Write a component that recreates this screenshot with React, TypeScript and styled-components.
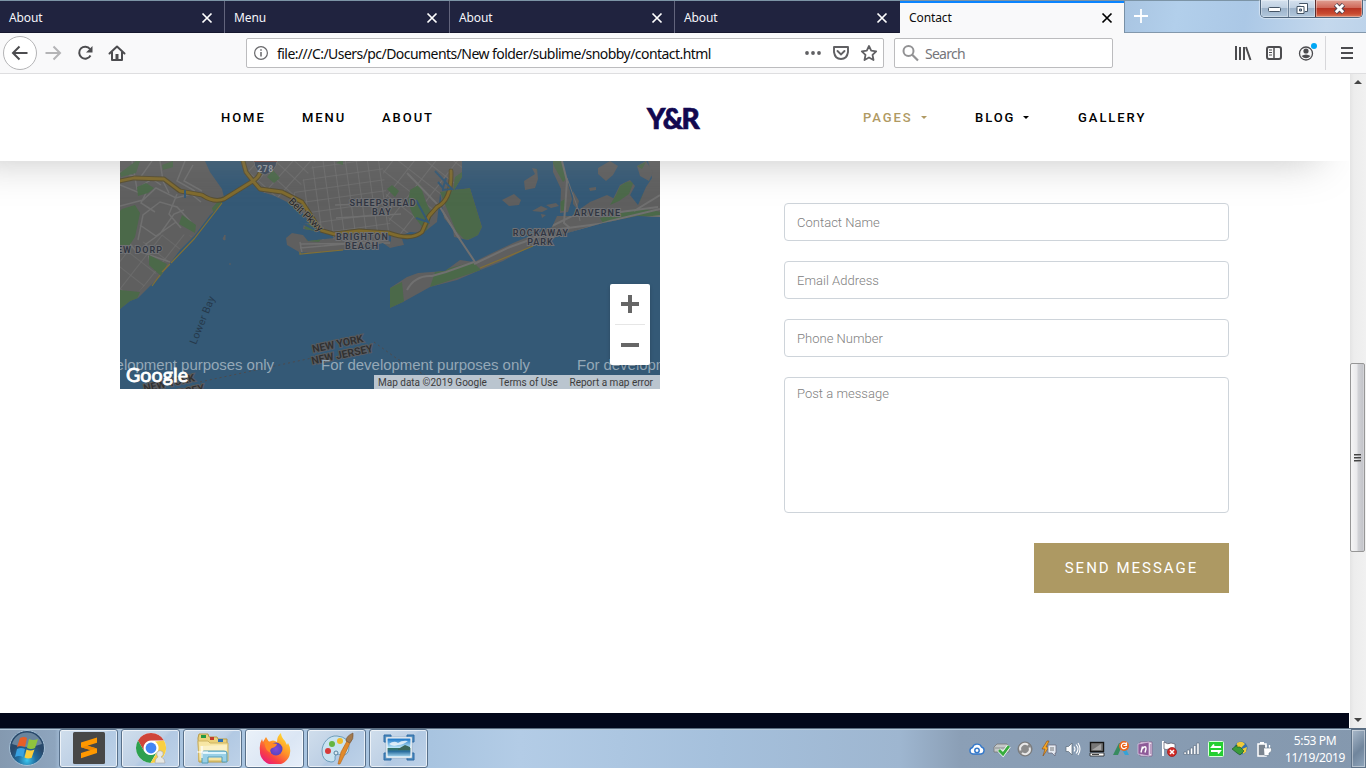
import React from "react";
import styled, { createGlobalStyle } from "styled-components";

const uiFont = '"Noto Sans", "Open Sans", sans-serif';

const GlobalStyle = createGlobalStyle`
  * { box-sizing: border-box; }
  body { margin: 0; overflow: hidden; background: #fff; font-family: Roboto, sans-serif; }
`;

const Screen = styled.div`
  width: 1366px;
  height: 768px;
  display: flex;
  flex-direction: column;
  overflow: hidden;
`;

/* ---------- browser chrome ---------- */
const TabStrip = styled.div`
  height: 33px;
  flex: none;
  display: flex;
  border-top: 1px solid #7c94a6;
  background: linear-gradient(100deg, #a9c5e2 82%, #b2cfeb 86%, #abc8e6 91%, #c4d8ed 97%, #bdd3ea);
`;

const Tab = styled.div<{ $active?: boolean; $last?: boolean }>`
  width: 225px;
  height: 32px;
  display: flex;
  align-items: center;
  justify-content: space-between;
  padding: 2px 11px 0 9px;
  font: 12px/16px ${uiFont};
  letter-spacing: -0.1px;
  color: ${(p) => (p.$active ? "#0c0c0d" : "#f5f5fa")};
  background: ${(p) => (p.$active ? "#f9f9fa" : "#20233f")};
  box-shadow: ${(p) => (p.$active ? "inset 0 2px #0a84ff" : "inset 0 -1px #15172e")};
  border-right: 1px solid ${(p) => (p.$active ? "#7890a6" : p.$last ? "#20233f" : "#62647c")};
`;

const TabTail = styled.div`
  flex: 1;
  display: flex;
  justify-content: space-between;
  align-items: flex-start;
  padding: 7px 3px 0 8px;
  border-bottom: 1px solid #8398ac;
`;

const WindowButtons = styled.div`
  display: flex;
  height: 18px;
  margin-top: -8px;
  border: 1px solid #50667d;
  border-top: 0;
  border-radius: 0 0 5px 5px;
  overflow: hidden;
  box-shadow: 0 0 1px 1px rgba(255, 255, 255, 0.45);
`;

const WindowButton = styled.div<{ $close?: boolean }>`
  width: ${(p) => (p.$close ? 47 : 27)}px;
  display: flex;
  align-items: center;
  justify-content: center;
  box-shadow: inset 0 0 0 1px rgba(255, 255, 255, 0.35);
  border-left: ${(p) => (p.$close ? "1px solid #5b2d2d" : "1px solid #6b8097")};
  &:first-child { border-left: 0; padding-top: 3px; }
  background: ${(p) =>
    p.$close
      ? "linear-gradient(#e0a093, #d0695a 45%, #b83423 50%, #c94a30 80%, #d97b5c)"
      : "linear-gradient(#d5e1ee, #bfd0e2 45%, #9db3ca 50%, #b2c7dc)"};
`;

const Toolbar = styled.div`
  height: 41px;
  flex: none;
  display: flex;
  align-items: center;
  background: #f9f9fa;
  border-bottom: 1px solid #dedee0;
`;

const NavButtons = styled.div`
  width: 246px;
  height: 40px;
  flex: none;
`;

const Field = styled.div<{ $w: number; $gap?: boolean }>`
  width: ${(p) => p.$w}px;
  height: 30px;
  flex: none;
  display: flex;
  align-items: center;
  margin-left: ${(p) => (p.$gap ? 10 : 0)}px;
  background: #fff;
  border: 1px solid #bcbcbe;
  border-radius: 2px;
  padding-left: 6px;
`;

const UrlText = styled.span`
  width: 534px;
  padding: 2px 0 0 8px;
  font: 14px/20px ${uiFont};
  letter-spacing: -0.55px;
  white-space: nowrap;
  color: #0c0c0d;
`;

const SearchText = styled.span`
  padding: 2px 0 0 6px;
  font: 14px/20px ${uiFont};
  letter-spacing: -0.75px;
  color: #75757a;
`;

const ToolIcons = styled.div`
  margin-left: auto;
  width: 146px;
  height: 40px;
`;

/* ---------- web page ---------- */
const Viewport = styled.div`
  height: 654px;
  flex: none;
  display: flex;
`;

const Page = styled.main`
  width: 1349px;
  display: flex;
  flex-direction: column;
  overflow: hidden;
  background: #fff;
`;

const SiteHeader = styled.header`
  position: relative;
  z-index: 2;
  height: 87px;
  flex: none;
  display: grid;
  grid-template-columns: 81px 80px 265px 216px 112px 103px auto;
  align-items: center;
  padding-left: 221px;
  background: #fff;
  box-shadow: -30px 0 40px rgba(128, 128, 128, 0.46);
`;

const NavLink = styled.a<{ $active?: boolean }>`
  display: flex;
  align-items: center;
  gap: 8px;
  font: 500 13px/20px Roboto, sans-serif;
  letter-spacing: 1.95px;
  color: ${(p) => (p.$active ? "#b09a63" : "#000")};
`;

const Caret = styled.i`
  border: 3.5px solid transparent;
  border-top-color: currentColor;
  border-bottom: 0;
`;

const Logo = styled.div`
  font: 900 28px/28px Lato, sans-serif;
  letter-spacing: -1.5px;
  color: #120850;
  -webkit-text-stroke: 0.7px #120850;
`;

const Content = styled.section`
  display: flex;
  height: 552px;
  flex: none;
  padding-left: 120px;
`;

const MapBox = styled.div`
  position: relative;
  width: 540px;
  height: 228px;
  flex: none;
  overflow: hidden;
  background: #345976;
`;

const MapFooter = styled.div`
  position: absolute;
  right: 0;
  bottom: 0;
  height: 14px;
  width: 286px;
  display: flex;
  justify-content: space-between;
  padding: 0 7px 0 4px;
  background: #bac5cf;
  font: 10px/15px Roboto, sans-serif;
  color: #3c3c3c;
  white-space: nowrap;
`;

const ZoomControl = styled.div`
  position: absolute;
  right: 10px;
  bottom: 24px;
  width: 40px;
  height: 81px;
  background: #fff;
  border-radius: 2px;
  box-shadow: 0 1px 4px -1px rgba(0, 0, 0, 0.3);
`;

const Form = styled.form`
  width: 445px;
  margin: 42px 0 0 124px;
  display: flex;
  flex-direction: column;
  gap: 20px;
`;

const Input = styled.div<{ $tall?: boolean }>`
  height: ${(p) => (p.$tall ? 136 : 38)}px;
  border: 1px solid #ced4da;
  border-radius: 4px;
  background: #fff;
  padding: ${(p) => (p.$tall ? "6px" : "9px")} 12px;
  font: 300 13px/20px Roboto, sans-serif;
  letter-spacing: 0.02px;
  color: #808080;
`;

const SendButton = styled.div`
  width: 195px;
  height: 50px;
  margin-top: 10px;
  align-self: flex-end;
  display: flex;
  align-items: center;
  justify-content: center;
  background: #ad9963;
  color: #fff;
  font: 400 15px/20px Roboto, sans-serif;
  letter-spacing: 2px;
`;

const PageFooter = styled.footer`
  flex: 1;
  background: #03071a;
`;

const Scrollbar = styled.div`
  width: 17px;
  display: flex;
  flex-direction: column;
  align-items: center;
  justify-content: space-between;
  padding: 6px 0 6px 1px;
  background: linear-gradient(90deg, #fff 1px, #e4e4e4 1px, #ededed 5px, #f1f1f1);
`;

const Arrow = styled.i<{ $down?: boolean }>`
  border: 4px solid transparent;
  border-bottom: ${(p) => (p.$down ? "0" : "4px solid #444")};
  border-top: ${(p) => (p.$down ? "4px solid #444" : "0")};
`;

const ScrollTrack = styled.div`
  flex: 1;
  padding-top: 279px;
`;

const Thumb = styled.div`
  width: 15px;
  height: 189px;
  margin-right: 1px;
  display: flex;
  flex-direction: column;
  align-items: center;
  justify-content: center;
  gap: 1px;
  border: 1px solid #969696;
  border-radius: 2px;
  background: linear-gradient(90deg, #f5f5f5, #e9e9eb 45%, #d1d2d6 55%, #c4c5ca 90%, #dcdcdf);
  i { width: 7px; height: 2px; border-top: 1px solid #444; background: #999; }
`;

/* ---------- taskbar ---------- */
const Taskbar = styled.div`
  height: 40px;
  flex: none;
  display: flex;
  border-top: 1px solid #5a6c80;
  box-shadow: inset 0 1px #b5c8db;
  background: linear-gradient(90deg, #8499b0, #8ea5be 55px, #a9c3de 62px, #a8c4e0 430px, #b3cce6 520px, #a5c0dc 720px, #9eb6d0 900px, #8b9fb6 960px, #8498ae);
`;

const StartButton = styled.div`
  width: 59px;
  padding: 0 0 0 8px;
`;

const AppButton = styled.div<{ $active?: boolean }>`
  width: 59px;
  height: 39px;
  margin-right: 3px;
  display: flex;
  align-items: center;
  justify-content: center;
  border: 1px solid #58708a;
  border-radius: 3px;
  box-shadow: inset 0 0 0 1px rgba(255, 255, 255, 0.65);
  background: ${(p) =>
    p.$active
      ? "linear-gradient(135deg, #eaf1f9, #dbe6f4 60%, #e7effa)"
      : "linear-gradient(135deg, #d0deec, #bed0e5 50%, #b2c9e3 55%, #bed2e8)"};
  svg { margin-top: -2px; }
`;

const Tray = styled.div`
  margin-left: auto;
  display: flex;
  align-items: center;
`;

const TrayIcon = styled.svg`
  width: 16px;
  height: 16px;
  margin-right: 7.9px;
  overflow: visible;
`;

const Clock = styled.div`
  width: 72px;
  margin-left: -1px;
  text-align: center;
  font: 12px/17px ${uiFont};
  letter-spacing: -0.4px;
  color: #fff;
`;

const ShowDesktop = styled.div`
  width: 15px;
  height: 39px;
  border: 1px solid #5f7388;
  box-shadow: inset 0 0 0 1px rgba(255, 255, 255, 0.4);
  background: linear-gradient(135deg, #a9b9ca, #70859c 55%, #8fa5bb);
`;

const CloseX = ({ color }: { color: string }) => (
  <svg width="12" height="12" viewBox="0 0 12 12">
    <path d="M1.5 1.500l9 9M10.500 1.500l-9 9" stroke={color} strokeWidth="1.700" />
  </svg>
);

const landShapes = (
  <>
    <path d="M120 161H205L210 172 222 189 224 197 221 205 210 215 195 235 180 250 171 262 160 277 150 286 138 298 130 301 120 309Z" />
    <path d="M242 161H462V177L453 192 440 194 437 222 423 233 410 232 400 236 388 233 385 240 403 245 390 248 383 243 345 250 310 253 299 252 287 245 286 238 292 233 303 235 308 241 334 238 330 233 303 229 304 223 310 224 302 212 287 202 275 196 262 192 253 182 248 172Z" />
    <path d="M440 192L470 188 482 227 478 235 468 240 454 237 453 229 444 218Z" />
    <path d="M390 288L407 277 418 273 445 271 460 260 474 262 490 254 513 243 552 227 557 216 572 216 580 209 590 202 607 195 617 200 630 195 638 205 646 187 652 178 648 161H660V217L637 216 603 223 567 233 530 247 503 261 478 271 457 280 430 287 403 302 390 308Z" />
    <path d="M502 200l12-6 7 6-2 5-10 1zM524 181l11-7-3-6 5 1 1 10-3 9-10 2zM532 211l9-5 7 3-6 3zM546 205l10-2 3 3-8 2zM541 214l5 1-4 3zM553 161h8l5 14 6 24-4 13-8 1 1-24-8-17zM573 191l6 10-2 8-4-5zM598 168l12-7 8 5-5 9-7 6-8-7zM589 188l7-1v3l-6 1zM637 166l9-5 7 11-4 9-9-5zM620 185l10-5 5 6-7 13-16 2z" />
    <path d="M391 235l10 1 3 9-13 1z" />
  </>
);

const StreetPattern = ({ id, size, angle }: { id: string; size: number; angle: number }) => (
  <pattern id={id} width={size} height={size} patternUnits="userSpaceOnUse" patternTransform={`rotate(${angle})`}>
    <path d={`M0 0H${size}M0 0V${size}`} stroke="#707070" strokeWidth="1.600" />
  </pattern>
);

const MapDrawing = () => (
  <svg width="540" height="228" viewBox="120 161 540 228" fontFamily="Roboto, sans-serif">
    <defs>
      <clipPath id="land">{landShapes}</clipPath>
      <StreetPattern id="streetsA" size={11} angle={-8} />
      <StreetPattern id="streetsB" size={13} angle={42} />
      <StreetPattern id="streetsC" size={17} angle={38} />
    </defs>
    <g fill="#5f5f5f">{landShapes}</g>
    <g clipPath="url(#land)">
      <path d="M248 161h68l-28 45-60-15z" fill="url(#streetsB)" />
      <path d="M316 161h66l10 75-70 4-34-38z" fill="url(#streetsA)" />
      <path d="M382 161h82v30l-60 45-14-5z" fill="url(#streetsC)" />
      <path d="M120 250l50-18 22 4-62 65-10 5z" fill="url(#streetsC)" opacity=".8" />
      <g fill="none" stroke="#707070" strokeWidth="1.500">
        <path d="M120 172l20 6 12-17M132 161l5 28 15-10 9 6M120 206l23-6 13-12 20 10 15-4 10 8M138 240l5-25 17-13 17 5 14 15M150 262l-4-18 14-10 14-20 10-4M160 161l3 20 6 12M185 161l-8 20 18 10M120 232l15 18 35 12M177 194l-8 20 12 14M193 165l-9 16 18 10M140 225l16 11 20-14M120 185l20 8M146 193l-5 10 14 9" />
      </g>
      <g fill="#4b6949">
        <path d="M136 161h4l-4 12-15 4-1-4z" />
        <path d="M122 209l13-4 5 8-5 24-6 9-9 3v-38z" />
        <path d="M137 187l9-4 8 5-6 5-10 3zM162 165l11-4v6l-10 3zM182 215l14 10-1 8-16-9zM212 208l11-12 1 5-10 13zM149 255l18 9-6 12-12-11z" />
        <path d="M267 177l6-7 7 8-6 5zM336 163l7-4v6zM304 228l8-8 7 8-8 5zM306 238l15 1-2 3-12-1z" />
        <path d="M410 190l10-6 6 18 6 12-6 18-13-17-5-12zM392 185l7 6-4 6-8-8zM455 177l7-5v18l-9 2zM440 192l30-4 12 39-5 11-12 2-9-9z" />
        <path d="M120 290l20 2-3 7-17 10zM390 288l12-6 2 20-14 6zM435 272l38-10 8 8-51 17z" />
        <path d="M535 161h9v5l-7 6zM552 161h10l4 18-3 3-8-14zM616 195l4-9 6-4 8-1-5 13-10 7-9 4zM637 188l6 6-3 7zM637 166l9-4-4 7zM600 218l39-10 22 4v5l-23-1-35 7zM560 202l5-3v12h-4z" />
      </g>
      <g fill="none" stroke="#707070" strokeWidth="2">
        <path d="M407 173l33 34 17 28 18 27M474 264L510 247 560 229 660 216M552 226l20-10 26-1 60-8M565 235l45-14 50-12M634 211l26-16" />
        <path d="M300 244l90-1M300 248l90-8M335 205l60-2M336 218l65-4M302 253l-2-11" strokeWidth="1.500" />
      </g>
    </g>
    <g fill="none" stroke="#707070" strokeWidth="2">
      <path d="M562 161l5 20-3 42 6 5M407 290q8-15 25-14l14-4 28-10" />
      <path d="M567 178l10 28 3 15" strokeWidth="1" />
      <path d="M440 207l17 28 18 27" />
    </g>
    <g fill="none" stroke="#584f32" strokeLinecap="round" strokeLinejoin="round">
      <path strokeWidth="4.800" d="M120 181l14-3 30 1 16 12 22 4q12 8 22 4L253 181q5-3 7-8M243 161l3 11 7 9 7 8 22 3 20 10 8 12 10 16 14 4 25-3 30 2q22 8 33-1l7-16 8-9q15-7 14-36" />
      <path strokeWidth="2.800" stroke="#806b2d" d="M120 181l14-3 30 1 16 12 22 4q12 8 22 4L253 181q5-3 7-8M243 161l3 11 7 9 7 8 22 3 20 10 8 12 10 16 14 4 25-3 30 2q22 8 33-1l7-16 8-9q15-7 14-36" />
    </g>
    <path d="M222 203l-28 36-23 24M170 264l-8 8M152 286l8-11M300 252v2l43-4M480 268l53-22" fill="none" stroke="#837033" strokeWidth="1.200" />
    <path d="M446 178l-3 10-5-6M416 200l12 22-12-4M435 171l17 18-10 1M185 190v8M300 222l20 10" fill="none" stroke="#345976" strokeWidth="2" />
    <path d="M223 239l2-4v5zM229 264h2" stroke="#5f5f5f" fill="#5f5f5f" />
    <g fill="none" stroke="#4d4a4c" strokeDasharray="2 3">
      <path d="M200 382l112-24M374 342l22 16 30 18" />
    </g>
    <path d="M254 161h23q-1 10-12 14-11-4-11-14z" fill="#3a4759" stroke="#777" strokeWidth=".7" />
    <path d="M254 161h23v1h-23z" fill="#754840" />
    <text x="265.500" y="172" fontSize="8.500" fontWeight="700" fill="#9b9ea4" textAnchor="middle" letterSpacing=".6">278</text>
    <g fontSize="9" fontWeight="600" letterSpacing="1.050" fill="#303642" stroke="#707174" strokeWidth="2" paintOrder="stroke" textAnchor="middle">
      <text x="383" y="206">SHEEPSHEAD</text>
      <text x="382" y="215">BAY</text>
      <text x="362.500" y="239.500">BRIGHTON</text>
      <text x="362" y="249">BEACH</text>
      <text x="597.500" y="216">ARVERNE</text>
      <text x="541" y="236">ROCKAWAY</text>
      <text x="540.500" y="245">PARK</text>
      <text x="140" y="253">EW DORP</text>
      <g fontSize="10.500" letterSpacing="0" fill="#303030" stroke="#5a5c60" transform="rotate(-12 340 350)">
        <text x="339" y="347">NEW YORK</text>
        <text x="341" y="358.500">NEW JERSEY</text>
      </g>
      <g fontSize="10.500" letterSpacing="0" fill="#303030" stroke="#5a5c60" transform="rotate(-12 168 388)">
        <text x="170" y="387">NEW YORK</text>
        <text x="172" y="399">NEW JERSEY</text>
      </g>
    </g>
    <text fontSize="10" fill="#252525" stroke="#77746b" strokeWidth="1.600" paintOrder="stroke" transform="translate(288 202) rotate(44)">Belt Pkwy</text>
    <text fontSize="10.500" fill="#26394c" transform="translate(196 345) rotate(-68)" letterSpacing=".3">Lower Bay</text>
    <g fontFamily="Liberation Sans, sans-serif" fontSize="15" fill="#94a8b7">
      <text x="65" y="369.500" textLength="209">For development purposes only</text>
      <text x="321" y="369.500" textLength="209">For development purposes only</text>
      <text x="577" y="369.500" textLength="209">For development purposes only</text>
    </g>
    <text x="126" y="382" fontFamily="Lato, sans-serif" fontSize="19.500" fontWeight="400" fill="#fff" stroke="#fff" strokeWidth=".8" textLength="62">Google</text>
  </svg>
);

const trayIcons: React.ReactNode[] = [
  <><path d="M4 13a3.300 3.300 0 01-.5-6.500 4.800 4.800 0 019-.5A3.600 3.600 0 0112 13z" fill="#fff" stroke="#3478ca" strokeWidth="1.400" /><circle cx="8" cy="9.500" r="2.200" fill="none" stroke="#3478ca" strokeWidth="1.500" /></>,
  <><path d="M1 6l3-3h10l2 3v5H1z" fill="#c5c9c9" stroke="#777" strokeWidth=".8" /><path d="M2 7h13" stroke="#8a8f8f" /><path d="M6 9l4 4 6-8" fill="none" stroke="#fff" strokeWidth="4.200" /><path d="M6 9l4 4 6-8" fill="none" stroke="#37ac3d" strokeWidth="2.800" /></>,
  <><circle cx="8" cy="8" r="7" fill="#8c8c8c" stroke="#777" /><path d="M3.500 9.500a4.800 4.800 0 017.500-5.500M12.500 6.500a4.800 4.800 0 01-7.500 5.500" fill="none" stroke="#e8e8e8" strokeWidth="2" /></>,
  <><path d="M6 0L1 8h3l-2 7 6-9H5l3-6z" fill="#f7a928" stroke="#8b4b10" strokeWidth=".6" /><path d="M7 4h8v8h-1v3l-3-3H7z" fill="#e5eaf2" stroke="#667" strokeWidth=".7" /><path d="M9 7h4M9 9h4" stroke="#777" /></>,
  <><path d="M1 5.500h2.500L7 2v12l-3.500-3.500H1z" fill="#f9fafc" stroke="#5a6877" strokeWidth=".7" /><path d="M9 5.500q2 2.500 0 5M11 3.500q4 4.500 0 9M13 2q4 6 0 12" fill="none" stroke="#fff" strokeWidth="1.100" /></>,
  <><rect x="1.500" y="1.500" width="13" height="9" fill="#777" stroke="#151515" strokeWidth="1.400" /><path d="M3 9l9-6v6z" fill="#a5a5a5" /><path d="M1 12h14v3H1z" fill="#fff" stroke="#222" strokeWidth=".8" /><path d="M3 13.500h7" stroke="#444" /></>,
  <><path d="M0 14L6 2h4L5 14z" fill="#388b60" /><path d="M6 3l6 11h4L10 2z" fill="#35a3d7" /><circle cx="11" cy="5" r="5" fill="#ea651d" /><path d="M13.500 6a2.700 2.700 0 11-.5-3l.5-1.500v3h-3" fill="none" stroke="#fff" strokeWidth="1.200" /></>,
  <><path d="M3 1h12v14H3z" fill="#eee3f1" stroke="#866091" strokeWidth=".8" /><path d="M1 3l11-2v14L1 13z" fill="#8e5b98" stroke="#d8c2df" strokeWidth=".8" /><path d="M4 11.500l1.500-6M5 8q4-4.500 4 0l-1 3.500" fill="none" stroke="#fff" strokeWidth="1.400" /><path d="M13.800 3v10" stroke="#a87fb0" /></>,
  <><path d="M2 0v15" stroke="#fff" strokeWidth="2" /><path d="M3 1q4 3 7 1l4 1v6q-4 0-6-1-3 1-5 0z" fill="#fff" stroke="#556" strokeWidth=".7" /><circle cx="11" cy="11" r="4.500" fill="#d22c27" stroke="#911" strokeWidth=".7" /><path d="M9 9l4 4M13 9l-4 4" stroke="#fff" strokeWidth="1.500" /></>,
  <g fill="#fff" stroke="#55677a" strokeWidth=".6"><path d="M0 11h2.300v2.500H0zM3.200 9h2.300v4.500H3.200zM6.400 7h2.300v6.500H6.400zM9.600 4.500h2.300v9H9.600zM12.800 2h2.300v11.500h-2.300z" /></g>,
  <><rect x=".5" y=".5" width="15" height="15" rx="1" fill="#24cf31" stroke="#d9ffdc" /><path d="M13 6H4l2-2.500M3 10h9l-2 2.500" fill="none" stroke="#fff" strokeWidth="1.800" /></>,
  <><circle cx="9" cy="7" r="6.500" fill="#3371ac" /><path d="M5 2q5-3 8 1l-4 4-5-1zM10 8l5-2-1 5-3 2z" fill="#f0c938" /><path d="M0 8l5-4v2h3l4 4-4 4-3-2z" fill="#3a9b39" stroke="#175323" strokeWidth=".6" /></>,
  <><path d="M2 3h8v12H2z" fill="#7b8590" stroke="#fff" strokeWidth="1.500" /><path d="M4 1h4v2H4z" fill="#fff" /><path d="M10 4v3M13.500 4v3" stroke="#fff" strokeWidth="1.300" /><path d="M8 7h7.500v2q0 2.500-2.500 3v2.500H8.500" fill="#fff" stroke="#66788b" strokeWidth=".6" /></>,
];

const SublimeIcon = () => (
  <svg width="32" height="32" viewBox="0 0 32 32">
    <rect width="32" height="32" rx="1.500" fill="#474747" />
    <path d="M8 10.500L24 5.500v5.200l-9.500 3 9.500 2.800V21L8 26.200V21l9.500-2.900L8 15.200z" fill="#ff9800" />
    <path d="M8 15.200l9.500 2.900 6.300-1.700-9.300-2.700z" fill="#f08800" />
  </svg>
);

const ChromeIcon = () => (
  <svg width="32" height="32" viewBox="0 0 32 32">
    <circle cx="16" cy="16" r="15" fill="#fff" />
    <path d="M3 8.500A15 15 0 0129 8.500H16a7.500 7.500 0 00-6.500 11.200z" fill="#cf4439" />
    <path d="M3 8.500A15 15 0 0015.500 31L22 19.700a7.500 7.500 0 01-12.800-.5z" fill="#2da04e" />
    <path d="M29 8.500A15 15 0 0115.500 31L22.500 19.700A7.500 7.500 0 0020 9.500z" fill="#f9cf42" />
    <circle cx="16" cy="16" r="6.800" fill="#fff" /><circle cx="16" cy="16" r="5.400" fill="#4285f4" />
    <path d="M20 31q0-5 3-6-2-2-1-5 3-3 6 0 1 3-2 5 4 1 4 6z" fill="#e8e8e3" stroke="#999" strokeWidth=".5" />
  </svg>
);

const ExplorerIcon = () => (
  <svg width="34" height="32" viewBox="0 0 34 32">
    <path d="M2 6l1-4h9l1 3h8l1 2h9v22l-2 1H3z" fill="#ebd27a" stroke="#b79a49" />
    <path d="M5 3h5v3H5z" fill="#249a43" /><path d="M14 5h4v3h-4z" fill="#c43b2c" /><path d="M22 7h5v3h-5z" fill="#2d72b4" />
    <path d="M2 9h10l2 2h18v18H3z" fill="#f7e6a4" stroke="#ceb463" />
    <path d="M4 14l27-1-1 13H5z" fill="#fbf1c6" />
    <path d="M6 31V21q0-2 2-2h20q3 0 3 2v9h-5v-5H12v6z" fill="#99d0e7" stroke="#539db7" />
    <path d="M7 21h23" stroke="#ddf5fd" strokeWidth="2" />
    <path d="M6 14v12M1 20h11" stroke="#fff" strokeWidth="1.200" />
  </svg>
);

const FirefoxIcon = () => (
  <svg width="32" height="32" viewBox="0 0 32 32">
    <defs>
      <linearGradient id="foxFire" x1=".9" y1="0" x2=".2" y2="1"><stop stopColor="#ffea35" /><stop offset=".45" stopColor="#ff9327" /><stop offset=".75" stopColor="#f94045" /><stop offset="1" stopColor="#e51685" /></linearGradient>
      <radialGradient id="foxGlobe"><stop stopColor="#804bdb" /><stop offset="1" stopColor="#5744bd" /></radialGradient>
    </defs>
    <path d="M3 7l1 3 3-5 3 5q4-3 8 0 0-6 4-9 0 4 4 8l2 4 1-2q3 5 2 10A15 13 0 011 19Q0 12 3 7z" fill="url(#foxFire)" />
    <circle cx="17" cy="17" r="6.500" fill="url(#foxGlobe)" />
    <path d="M5 10q5-2 8 1l5 1q-1 3-5 4-3 2-1 5-6-3-6-8z" fill="#ff8a25" />
  </svg>
);

const PaintIcon = () => (
  <svg width="34" height="34" viewBox="0 0 34 34">
    <path d="M17 5C9 4 2 12 2 20q0 10 9 11 5 0 4-5 0-4 6-2 8 1 8-8 0-10-12-11z" fill="#c9e3f1" stroke="#6d9dba" />
    <circle cx="8" cy="20" r="3" fill="#d73b3a" /><circle cx="12" cy="13" r="3" fill="#65b541" /><circle cx="20" cy="10" r="3" fill="#f0bc2b" /><circle cx="16" cy="22" r="2" fill="#dceaf3" stroke="#5682a0" /><circle cx="25" cy="18" r="2" fill="#2470cc" />
    <path d="M18 33l3-12 6-11 3 2-5 11-5 10z" fill="#e08a2b" stroke="#b56115" strokeWidth=".6" />
    <path d="M26 10q0-5 7-8 1 6-3 10z" fill="#a47a4d" stroke="#715239" strokeWidth=".6" />
  </svg>
);

const PictureIcon = () => (
  <svg width="32" height="28" viewBox="0 0 32 28">
    <defs><linearGradient id="skyView" x1="0" y1="0" x2="0" y2="1"><stop stopColor="#1773c5" /><stop offset=".5" stopColor="#b8e4f8" /><stop offset=".53" stopColor="#34755e" /><stop offset=".72" stopColor="#2a6f9f" /><stop offset="1" stopColor="#9ed2ed" /></linearGradient></defs>
    <path d="M1 8V1h7v7zM24 1h7v7h-7zM24 19h7v7h-7zM1 19h7v7H1z" fill="#4b8abf" stroke="#2e6ba4" />
    <path d="M3 3h26v21H3z" fill="#fff" stroke="#8aa5be" strokeWidth=".6" /><path d="M4.500 4.500h23v18h-23z" fill="url(#skyView)" />
    <path d="M6 10q5-4 9-1 4-3 10-2-5 4-10 4-5 2-9-1z" fill="#fff" opacity=".75" /><path d="M15 15l7-4 5 2v3H15z" fill="#39665b" />
  </svg>
);

const apps = [SublimeIcon, ChromeIcon, ExplorerIcon, FirefoxIcon, PaintIcon, PictureIcon];

export default function App() {
  return (
    <Screen>
      <GlobalStyle />
      <TabStrip>
        {["About", "Menu", "About", "About"].map((label, i) => (
          <Tab key={i} $last={i === 3}>{label}<CloseX color="#fff" /></Tab>
        ))}
        <Tab $active>Contact<CloseX color="#000" /></Tab>
        <TabTail>
          <svg width="16" height="16" viewBox="0 0 16 16"><path d="M8 1v14M1 8h14" stroke="#fff" strokeWidth="1.800" /></svg>
          <WindowButtons>
            <WindowButton><svg width="13" height="6"><rect x=".5" y=".5" width="12" height="4" rx="1" fill="#fff" stroke="#455465" /></svg></WindowButton>
            <WindowButton><svg width="12" height="12"><path d="M3.500 1v-.5h8v8H9" fill="#fff" stroke="#455465" /><path d="M1 3.500h7v7H1z" fill="#fff" stroke="#455465" /><path d="M3.500 6h2v2h-2z" fill="#9bb0c8" stroke="#455465" /></svg></WindowButton>
            <WindowButton $close><svg width="13" height="12" viewBox="0 0 13 12"><path d="M2.500 1.500l8 8M10.500 1.500l-8 8" stroke="#4d4350" strokeWidth="4.600" /><path d="M2.800 1.800l7.400 7.400M10.200 1.800L2.800 9.200" stroke="#fff" strokeWidth="2.800" /></svg></WindowButton>
          </WindowButtons>
        </TabTail>
      </TabStrip>

      <Toolbar>
        <NavButtons>
          <svg width="246" height="40" viewBox="0 33 246 40" fill="none">
            <circle cx="20" cy="53" r="16.500" fill="#fff" stroke="#b4b4b6" />
            <path d="M27.500 53H13M19.500 46.500L13 53l6.500 6.500" stroke="#4c4c4f" strokeWidth="2" />
            <path d="M45.500 53H60M53.500 46.500L60 53l-6.500 6.500" stroke="#b4b4b6" strokeWidth="2" />
            <path d="M90 49a6 6 0 10.500 6.500" stroke="#4c4c4f" strokeWidth="2" />
            <path d="M92.500 46v6.500H86z" fill="#4c4c4f" />
            <path d="M109.500 53.500L117 46.500l7.500 7M112 52v8h10v-8" stroke="#4c4c4f" strokeWidth="2" strokeLinejoin="round" strokeLinecap="round" />
            <path d="M115.500 54h3v6h-3z" fill="#4c4c4f" />
          </svg>
        </NavButtons>
        <Field $w={638}>
          <svg width="16" height="16" viewBox="0 0 16 16"><circle cx="8" cy="8" r="6.400" fill="none" stroke="#68686b" strokeWidth="1.200" /><path d="M8 7v4.500M8 4.300v1.500" stroke="#68686b" strokeWidth="1.500" /></svg>
          <UrlText>file:///C:/Users/pc/Documents/New folder/sublime/snobby/contact.html</UrlText>
          <svg width="76" height="20" viewBox="803 43 76 20" fill="none" stroke="#606063">
            <g fill="#606063" stroke="none"><circle cx="807" cy="53" r="1.900" /><circle cx="813" cy="53" r="1.900" /><circle cx="819" cy="53" r="1.900" /></g>
            <path d="M834 47h14v5q-1 7-7 7t-7-7z" strokeWidth="1.900" strokeLinejoin="round" /><path d="M837.500 51l3.500 3.500 3.500-3.500" strokeWidth="1.900" strokeLinecap="round" />
            <path d="M869 46l2.200 4.700 5 .7-3.700 3.500 1 5.100-4.500-2.500-4.500 2.500 1-5.100-3.700-3.500 5-.7z" strokeWidth="1.800" strokeLinejoin="round" />
          </svg>
        </Field>
        <Field $w={219} $gap>
          <svg width="18" height="18" viewBox="0 0 18 18"><circle cx="7.500" cy="7" r="5" fill="none" stroke="#929294" strokeWidth="2" /><path d="M11 10.500l6 6" stroke="#929294" strokeWidth="2.200" /></svg>
          <SearchText>Search</SearchText>
        </Field>
        <ToolIcons>
          <svg width="146" height="40" viewBox="1220 33 146 40" fill="none" stroke="#4c4c4f" strokeWidth="2">
            <path d="M1236 46v14M1240 47v13M1244 47v13M1246 47l4.500 13" />
            <rect x="1267" y="47" width="14" height="12" rx="2" /><path d="M1274 47v12" strokeWidth="1.500" /><path d="M1269 50h3M1269 52.500h3M1269 55h3" strokeWidth="1" />
            <circle cx="1306" cy="53.500" r="6.500" strokeWidth="1.300" /><circle cx="1306" cy="51" r="2.600" fill="#4c4c4f" stroke="none" /><path d="M1301.500 56q4.500-3 9 0-4.500 4.500-9 0z" fill="#4c4c4f" stroke="none" />
            <circle cx="1314" cy="46" r="3" fill="#00a7f5" stroke="none" />
            <path d="M1325.500 36v34" stroke="#d7d7da" strokeWidth="1" />
            <path d="M1341 48h12M1341 53h12M1341 58h12" />
          </svg>
        </ToolIcons>
      </Toolbar>

      <Viewport>
        <Page>
          <SiteHeader>
            <NavLink>HOME</NavLink>
            <NavLink>MENU</NavLink>
            <NavLink>ABOUT</NavLink>
            <Logo>Y&amp;R</Logo>
            <NavLink $active>PAGES<Caret /></NavLink>
            <NavLink>BLOG<Caret /></NavLink>
            <NavLink>GALLERY</NavLink>
          </SiteHeader>
          <Content>
            <MapBox>
              <MapDrawing />
              <ZoomControl>
                <svg width="40" height="81" viewBox="0 0 40 81"><path d="M11 20h18M20 11v18M11 61h18" stroke="#666" strokeWidth="4" /><path d="M5 40.500h30" stroke="#e6e6e6" /></svg>
              </ZoomControl>
              <MapFooter><span>Map data ©2019 Google</span><span>Terms of Use</span><span>Report a map error</span></MapFooter>
            </MapBox>
            <Form>
              <Input>Contact Name</Input>
              <Input>Email Address</Input>
              <Input>Phone Number</Input>
              <Input $tall>Post a message</Input>
              <SendButton>SEND MESSAGE</SendButton>
            </Form>
          </Content>
          <PageFooter />
        </Page>
        <Scrollbar>
          <Arrow />
          <ScrollTrack>
            <Thumb><i /><i /><i /></Thumb>
          </ScrollTrack>
          <Arrow $down />
        </Scrollbar>
      </Viewport>

      <Taskbar>
        <StartButton>
          <svg width="38" height="38" viewBox="0 0 38 38">
            <defs><radialGradient id="orb" cx=".5" cy=".85"><stop stopColor="#3cc6ef" /><stop offset=".5" stopColor="#216d9f" /><stop offset="1" stopColor="#29496b" /></radialGradient></defs>
            <circle cx="19" cy="19" r="17.500" fill="url(#orb)" stroke="#a6c1d7" />
            <path d="M4 15a15.500 15.500 0 0130 0q-15 6-30 0z" fill="#b8cbdc" opacity=".45" />
            <path d="M12 9q4-2 7 0l-2 9q-4-2-8 0z" fill="#e65f28" /><path d="M21 10q4 2 9 0l-3 9q-4 2-8 0z" fill="#8fc33d" /><path d="M9 20q4-2 8 0l-2 8q-4-2-8 0z" fill="#38a1e1" /><path d="M18.500 20.500q4 2 8 0l-3 8.500q-4 1-7-.500z" fill="#fbcd3b" />
          </svg>
        </StartButton>
        {apps.map((Icon, i) => <AppButton key={i} $active={i === 3}><Icon /></AppButton>)}
        <Tray>
          {trayIcons.map((icon, i) => <TrayIcon key={i} viewBox="0 0 16 16">{icon}</TrayIcon>)}
          <Clock>5:53 PM<br />11/19/2019</Clock>
          <ShowDesktop />
        </Tray>
      </Taskbar>
    </Screen>
  );
}
